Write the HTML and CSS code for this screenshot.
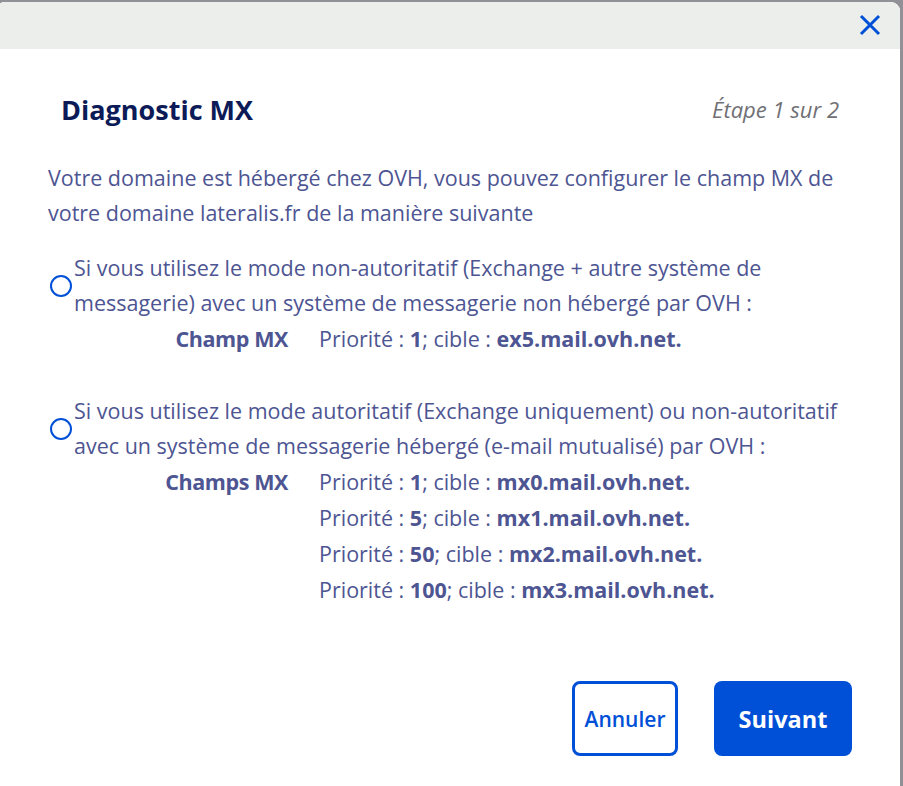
FILE: index.html
```html
<!DOCTYPE html>
<html lang="fr">
<head>
<meta charset="utf-8">
<title>Diagnostic MX</title>
<link rel="stylesheet" href="styles.css">
</head>
<body>
<div class="modal">
  <div class="modal-header">
    <button class="close" aria-label="Fermer">
      <svg width="22" height="22" viewBox="0 0 22 22"><path d="M2 2 L20 20 M20 2 L2 20" stroke="#0050d7" stroke-width="3" fill="none"/></svg>
    </button>
  </div>
  <div class="modal-body">
    <div class="title-row">
      <h1 class="title">Diagnostic MX</h1>
      <span class="step">Étape 1 sur 2</span>
    </div>
    <p class="intro">Votre domaine est hébergé chez OVH, vous pouvez configurer le champ MX de votre domaine lateralis.fr de la manière suivante</p>

    <div class="option">
      <label class="option-label">
        <span class="radio"></span>
        <span class="option-text">Si vous utilisez le mode non-autoritatif (Exchange + autre système de messagerie) avec un système de messagerie non hébergé par OVH :</span>
      </label>
      <div class="mx-table">
        <span class="mx-label">Champ MX</span>
        <span class="mx-value">Priorité : <b>1</b>; cible : <b>ex5.mail.ovh.net.</b></span>
      </div>
    </div>

    <div class="option option-second">
      <label class="option-label">
        <span class="radio"></span>
        <span class="option-text">Si vous utilisez le mode autoritatif (Exchange uniquement) ou non-autoritatif avec un système de messagerie hébergé (e-mail mutualisé) par OVH :</span>
      </label>
      <div class="mx-table">
        <span class="mx-label">Champs MX</span>
        <span class="mx-value">Priorité : <b>1</b>; cible : <b>mx0.mail.ovh.net.</b></span>
        <span class="mx-value">Priorité : <b>5</b>; cible : <b>mx1.mail.ovh.net.</b></span>
        <span class="mx-value">Priorité : <b>50</b>; cible : <b>mx2.mail.ovh.net.</b></span>
        <span class="mx-value">Priorité : <b>100</b>; cible : <b>mx3.mail.ovh.net.</b></span>
      </div>
    </div>

    <div class="actions">
      <button class="btn btn-secondary">Annuler</button>
      <button class="btn btn-primary">Suivant</button>
    </div>
  </div>
</div>
</body>
</html>
```

FILE: styles.css
```css
* { box-sizing: border-box; }

html, body {
  margin: 0;
  height: 786px;
  overflow: hidden;
}

body {
  background: #909096;
  font-family: "Open Sans", "Noto Sans", sans-serif;
  color: #4d5592;
}

.modal {
  margin: 2px 0 0 -4px;
  width: 904px;
  height: 792px;
  background: #ffffff;
  border-radius: 9px;
  overflow: hidden;
  display: flex;
  flex-direction: column;
}

.modal-header {
  height: 47px;
  background: #eceeec;
  display: flex;
  justify-content: flex-end;
  align-items: center;
  padding-right: 19px;
  flex: none;
}

.close {
  border: 0;
  background: transparent;
  padding: 0;
  width: 22px;
  height: 22px;
  display: block;
  margin-top: -1px;
}
.close svg { display: block; }

.modal-body {
  padding: 41px 48px 0 52px;
  flex: 1;
  display: flex;
  flex-direction: column;
}

.title-row {
  display: flex;
  justify-content: space-between;
  align-items: center;
  padding: 0 13px;
  height: 38px;
}

.title {
  margin: 0;
  font-size: 27px;
  font-weight: 700;
  color: #0c1b57;
}

.step {
  font-style: italic;
  font-size: 22px;
  color: #707075;
}

.intro {
  margin: 32px 0 0;
  font-size: 21.5px;
  line-height: 35px;
}

.option {
  margin-top: 20px;
  font-size: 21.5px;
  line-height: 35px;
}

.option-second {
  margin-top: 36px;
}

.option-label {
  display: flex;
  align-items: center;
  margin-right: -4px;
}

.radio {
  flex: none;
  width: 22px;
  height: 22px;
  border: 2.5px solid #0050d7;
  border-radius: 50%;
  margin: 2px 2px 0 2px;
}

.option-text {
  flex: 1;
}

.mx-table {
  display: grid;
  grid-template-columns: 240px auto;
  grid-auto-rows: 36px;
  column-gap: 31px;
  justify-content: start;
  line-height: 36px;
  margin-top: 1px;
}

.mx-label {
  grid-row: 1;
  text-align: right;
  font-weight: 700;
  letter-spacing: -0.4px;
}

.mx-value {
  grid-column: 2;
}

.mx-value b { font-weight: 700; }

.actions {
  margin-top: auto;
  margin-bottom: 38px;
  display: flex;
  justify-content: flex-end;
  gap: 36px;
}

.btn {
  height: 75px;
  border-radius: 8px;
  font-family: inherit;
  cursor: pointer;
  padding: 0;
}

.btn-secondary {
  width: 106px;
  background: #ffffff;
  border: 3px solid #0050d7;
  color: #0050d7;
  font-size: 21px;
  font-weight: 600;
}

.btn-primary {
  width: 138px;
  background: #0050d7;
  border: 0;
  color: #ffffff;
  font-size: 23.5px;
  font-weight: 700;
}
```
